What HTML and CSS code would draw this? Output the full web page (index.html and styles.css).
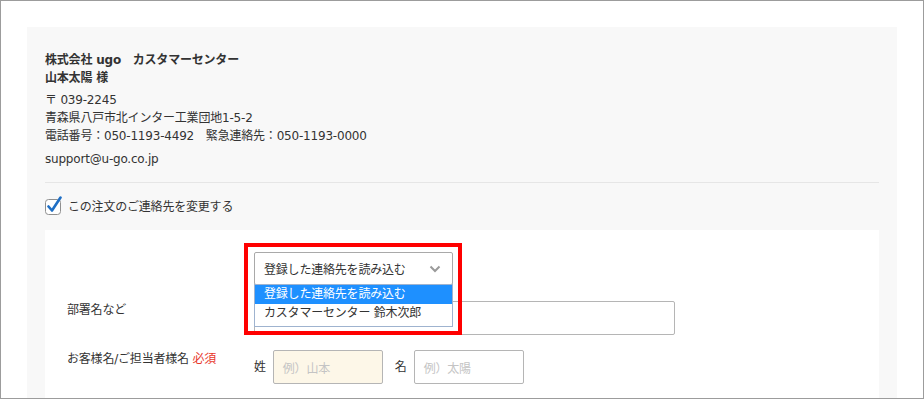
FILE: index.html
```html
<!DOCTYPE html>
<html lang="ja">
<head>
<meta charset="utf-8">
<title>ご連絡先</title>
<link rel="stylesheet" href="styles.css">
</head>
<body>
<div class="frame">
  <div class="panel">
    <div class="address">
      <p class="strong">株式会社 ugo　カスタマーセンター</p>
      <p class="strong">山本太陽 様</p>
      <p class="gap">〒 039-2245</p>
      <p>青森県八戸市北インター工業団地1-5-2</p>
      <p>電話番号：050-1193-4492　緊急連絡先：050-1193-0000</p>
      <p class="gap2">support@u-go.co.jp</p>
    </div>
    <div class="divider"></div>
    <label class="check-row">
      <svg class="checkbox" width="18" height="20" viewBox="0 0 18 20">
        <rect x="0.5" y="3.5" width="15" height="15" rx="3" fill="#fff" stroke="#8f8f8f"/>
        <path d="M3.5 10.5 L7 14.5 L15.5 1.5" fill="none" stroke="#1f6fc5" stroke-width="2.6" stroke-linecap="round" stroke-linejoin="round"/>
      </svg>
      <span>この注文のご連絡先を変更する</span>
    </label>
    <div class="form">
      <div class="row">
        <div class="label"></div>
        <div class="field">
          <div class="select-wrap">
            <div class="select">
              <span>登録した連絡先を読み込む</span>
              <svg class="chev" width="12" height="8" viewBox="0 0 12 8"><path d="M1.5 1.5 L6 6 L10.5 1.5" fill="none" stroke="#9a9a9a" stroke-width="2"/></svg>
            </div>
            <div class="dropdown">
              <div class="opt active">登録した連絡先を読み込む</div>
              <div class="opt">カスタマーセンター 鈴木次郎</div>
            </div>
            <div class="highlight"></div>
          </div>
        </div>
      </div>
      <div class="row">
        <div class="label">部署名など</div>
        <div class="field"><div class="input wide"></div></div>
      </div>
      <div class="row">
        <div class="label">お客様名/ご担当者様名 <span class="req">必須</span></div>
        <div class="field names">
          <span class="name-label">姓</span>
          <div class="input short filled"><span class="ph">例）山本</span></div>
          <span class="name-label second">名</span>
          <div class="input short"><span class="ph">例）太陽</span></div>
        </div>
      </div>
    </div>
  </div>
</div>
</body>
</html>
```

FILE: styles.css
```css
* { box-sizing: border-box; }
html, body { margin: 0; padding: 0; background: #fff; }
body {
  font-family: "DejaVu Sans", "Noto Sans CJK JP", sans-serif;
  font-size: 12px;
  letter-spacing: -0.2px;
  color: #333;
}
.frame {
  width: 924px;
  height: 399px;
  border: 1px solid #9c9c9c;
  padding: 26px 26px 0 26px;
  overflow: hidden;
}
.panel {
  width: 870px;
  height: 400px;
  background: #f8f8f8;
  padding: 24px 18px 0 18px;
}
.address p {
  margin: 0;
  line-height: 18px;
  height: 18px;
  white-space: nowrap;
}
.address .strong { font-weight: bold; }
.address .gap { margin-top: 4px; }
.address .gap2 { margin-top: 5px; }
.divider {
  height: 1px;
  background: #e6e6e6;
  margin-top: 14px;
}
.check-row {
  display: flex;
  align-items: center;
  gap: 5px;
  height: 20px;
  margin-top: 14px;
}
.checkbox { display: block; margin-top: -3px; }
.check-row span { line-height: 18px; }
.form {
  margin-top: 13px;
  background: #fff;
  padding: 22px 22px 40px 22px;
  display: flex;
  flex-direction: column;
  gap: 16px;
}
.row {
  display: grid;
  grid-template-columns: 187px 1fr;
  align-items: start;
}
.row + .row + .row { margin-top: -1px; }
.label {
  line-height: 18px;
  white-space: nowrap;
}
.req { color: #e8382c; }
.field { display: flex; align-items: center; }
.select-wrap { position: relative; width: 199px; }
.select {
  height: 33px;
  border: 1px solid #a9a9a9;
  border-radius: 2px;
  background: #fff;
  padding: 0 11px 0 9px;
  display: flex;
  align-items: center;
  justify-content: space-between;
}
.chev { display: block; }
.dropdown {
  position: absolute;
  left: 0;
  top: 32px;
  width: 199px;
  background: #fff;
  border: 1px solid #9fb3cf;
  padding-bottom: 3px;
  z-index: 2;
}
.opt {
  height: 19px;
  line-height: 19px;
  padding-left: 9px;
  white-space: nowrap;
}
.opt.active { background: #1e90ff; color: #fff; }
.highlight {
  position: absolute;
  left: -10px;
  top: -9px;
  width: 218px;
  height: 92px;
  border: 4px solid #ff0000;
  z-index: 3;
}
.input {
  height: 34px;
  border: 1px solid #b5b5b5;
  border-radius: 2px;
  background: #fff;
  display: flex;
  align-items: center;
  padding-left: 9px;
}
.input.wide { width: 421px; }
.input.short { width: 110px; }
.input.filled { background: #fdf7e8; }
.ph { color: #c4c4c4; }
.names { gap: 7px; }
.name-label { line-height: 18px; }
.name-label.second { margin-left: 5px; }
```
